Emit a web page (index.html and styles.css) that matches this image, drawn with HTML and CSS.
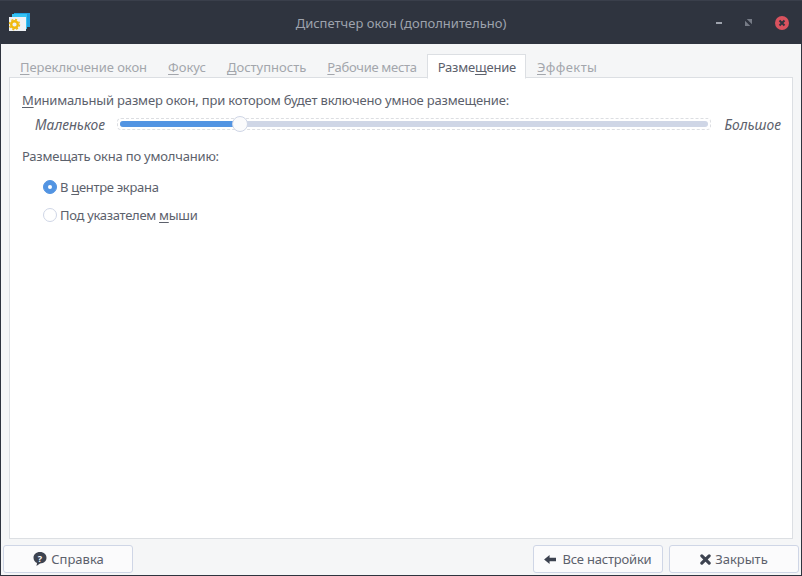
FILE: index.html
```html
<!DOCTYPE html>
<html>
  <head>
    <meta name="viewport" content="width=device-width, initial-scale=1" />
    <link rel="stylesheet" href="styles.css">
  </head>
  <body>
    <div class="window">
      <div class="titlebar">
        <svg class="app-icon" width="24" height="20" viewBox="0 0 24 20">
          <rect x="6" y="0" width="16" height="14" fill="#1f9fe0"/>
          <rect x="4" y="1" width="15" height="15" fill="#35c3f2"/>
          <rect x="1" y="4" width="17" height="14" fill="#eef1f5"/>
          <circle cx="6.500" cy="11.500" r="3.300" fill="none" stroke="#f0b90f" stroke-width="2.400"/>
          <circle cx="6.500" cy="11.500" r="5" fill="none" stroke="#f0b90f" stroke-width="1.400" stroke-dasharray="2 1.930"/>
        </svg>
        <div class="title">Диспетчер окон (дополнительно)</div>
        <div class="wm-buttons">
          <span class="wm-min"></span>
          <svg width="7" height="7" viewBox="0 0 8 8"><path d="M0 8V2L6 8ZM2 0H8V6Z" fill="#767b86"/></svg>
          <svg width="14" height="14" viewBox="0 0 14 14">
            <circle cx="7" cy="7" r="7" fill="#d9525e"/>
            <path d="M4.500 4.500L9.500 9.500M9.500 4.500L4.500 9.500" stroke="#2f343f" stroke-width="2"/>
          </svg>
        </div>
      </div>

      <div class="content">
        <div class="tabs">
          <div class="tab first"><u>П</u>ереключение окон</div>
          <div class="tab"><u>Ф</u>окус</div>
          <div class="tab"><u>Д</u>оступность</div>
          <div class="tab tight"><u>Р</u>абочие места</div>
          <div class="tab active">Разме<u>щ</u>ение</div>
          <div class="tab wide"><u>Э</u>ффекты</div>
        </div>
        <div class="page">
          <div class="label tight-label"><u>М</u>инимальный размер окон, при котором будет включено умное размещение:</div>
          <div class="scale-row">
            <em>Маленькое</em>
            <div class="scale">
              <div class="trough">
                <div class="fill"></div>
                <div class="knob"></div>
              </div>
            </div>
            <em>Большое</em>
          </div>
          <div class="label second">Размещать окна по умолчанию:</div>
          <div class="radio-row"><span class="radio checked"></span><span>В <u>ц</u>ентре экрана</span></div>
          <div class="radio-row"><span class="radio"></span><span>Под указателем <u>м</u>ыши</span></div>
        </div>
        <div class="buttons">
          <button class="btn" type="button">
            <svg width="16" height="16" viewBox="0 0 16 16">
              <path d="M8 1C4 1 1.500 3.500 1.500 6.800C1.500 9.400 3 11.300 5 12L4.500 15L8 12.500C12 12.500 14.500 10 14.500 6.800C14.500 3.500 12 1 8 1Z" fill="#3d4350"/>
              <text x="8" y="10.500" class="q">?</text>
            </svg>
            Справка
          </button>
          <div class="spacer"></div>
          <button class="btn settings" type="button">
            <svg width="13" height="11" viewBox="0 0 14 12"><path d="M0 6L6 1V4H13V8H6V11Z" fill="#3d4350"/></svg>
            Все настройки
          </button>
          <button class="btn closer" type="button">
            <svg width="11" height="11" viewBox="0 0 12 12"><path d="M2 2L10 10M10 2L2 10" stroke="#3d4350" stroke-width="3.400" stroke-linecap="round"/></svg>
            Закрыть
          </button>
        </div>
      </div>
    </div>
  </body>
</html>
```

FILE: styles.css
```css
html, body {
  margin: 0;
  padding: 0;
  height: 100%;
}

body {
  background: #2f343f;
  font-family: "Noto Sans", sans-serif;
  font-size: 13px;
  color: #5c616c;
  overflow: hidden;
}

u {
  text-decoration-thickness: 1px;
  text-underline-offset: 2px;
}

.window {
  display: flex;
  flex-direction: column;
  height: 576px;
}

.titlebar {
  display: flex;
  align-items: center;
  height: 44px;
  flex: none;
  background: #2f343f;
  border-top: 1px solid #3a3f4b;
  box-sizing: border-box;
  position: relative;
}

.app-icon {
  margin-left: 8px;
}

.title {
  position: absolute;
  left: 0;
  right: 0;
  top: 14px;
  text-align: center;
  color: #9ea3ad;
  line-height: 16px;
}

.wm-buttons {
  margin-left: auto;
  display: flex;
  align-items: center;
  gap: 23px;
  margin-right: 13px;
}

.wm-min {
  width: 6px;
  height: 2px;
  background: #9ea3ad;
}

.content {
  flex: 1;
  margin: 0 1px 1px 1px;
  background: #f5f6f7;
  display: flex;
  flex-direction: column;
  padding: 10px 8px 0 8px;
  min-height: 0;
}

.tabs {
  display: flex;
  height: 24px;
  flex: none;
  margin-bottom: -1px;
  position: relative;
  z-index: 1;
}

.tab {
  padding: 4px 10px 0 11px;
  line-height: 18px;
  color: #a3a6ac;
  box-sizing: border-box;
}

.tab.first {
  letter-spacing: -0.06px;
}

.tab.tight {
  letter-spacing: -0.3px;
}

.tab.wide {
  letter-spacing: 0.4px;
}

.tab.active {
  background: #fff;
  color: #5c616c;
  border: 1px solid #dcdfe3;
  border-bottom: 1px solid #fff;
  padding: 3px 9px 0 10px;
  height: 25px;
  letter-spacing: -0.2px;
}

.page {
  flex: 1;
  background: #fff;
  border: 1px solid #dcdfe3;
  padding: 13px 11px 0 12px;
  min-height: 0;
}

.label {
  line-height: 18px;
}

.label.tight-label {
  letter-spacing: -0.17px;
}

.label.second {
  margin-top: 11px;
  letter-spacing: -0.2px;
}

.scale-row {
  display: flex;
  align-items: center;
  margin-top: 3px;
  height: 24px;
}

.scale-row em {
  font-style: italic;
  font-size: 13.800px;
  flex: none;
}

.scale-row em:first-child {
  margin-left: 13px;
}

.scale {
  flex: 1;
  margin: 0 13px 0 12px;
  height: 6px;
  border: 1px dashed #dcdee2;
  border-radius: 4px;
  padding: 2px;
}

.trough {
  height: 6px;
  background: #cfd6e6;
  border-radius: 3px;
  position: relative;
}

.fill {
  height: 6px;
  width: 121px;
  background: #5294e2;
  border-radius: 3px 0 0 3px;
}

.knob {
  position: absolute;
  left: 112px;
  top: -5px;
  width: 14px;
  height: 14px;
  border: 1px solid #cfd6e6;
  border-radius: 50%;
  background: #fbfbfc;
}

.radio-row {
  display: flex;
  align-items: center;
  height: 28px;
  margin-left: 21px;
  letter-spacing: -0.3px;
}

.label.second + .radio-row {
  margin-top: 8px;
}

.radio {
  width: 12px;
  height: 12px;
  border: 1px solid #cfd6e6;
  border-radius: 50%;
  background: #fff;
  margin-right: 3px;
  flex: none;
  position: relative;
}

.radio.checked {
  background: #5294e2;
  border-color: #5294e2;
}

.radio.checked::after {
  content: "";
  position: absolute;
  left: 4px;
  top: 4px;
  width: 4px;
  height: 4px;
  border-radius: 50%;
  background: #fff;
}

.buttons {
  display: flex;
  flex: none;
  gap: 6px;
  margin: 6px -6px 2px -6px;
}

.spacer {
  flex: 1;
}

.btn {
  width: 130px;
  height: 28px;
  display: flex;
  align-items: center;
  justify-content: center;
  gap: 3px;
  background: #fbfbfc;
  border: 1px solid #cfd6e6;
  border-radius: 3px;
  color: #5c616c;
  font: inherit;
  padding: 0;
}

.btn.settings {
  gap: 5px;
  letter-spacing: -0.2px;
}

.btn.closer {
  gap: 4px;
}

.q {
  font-family: "Noto Sans", sans-serif;
  font-size: 9px;
  font-weight: 700;
  fill: #fff;
  text-anchor: middle;
}
```
